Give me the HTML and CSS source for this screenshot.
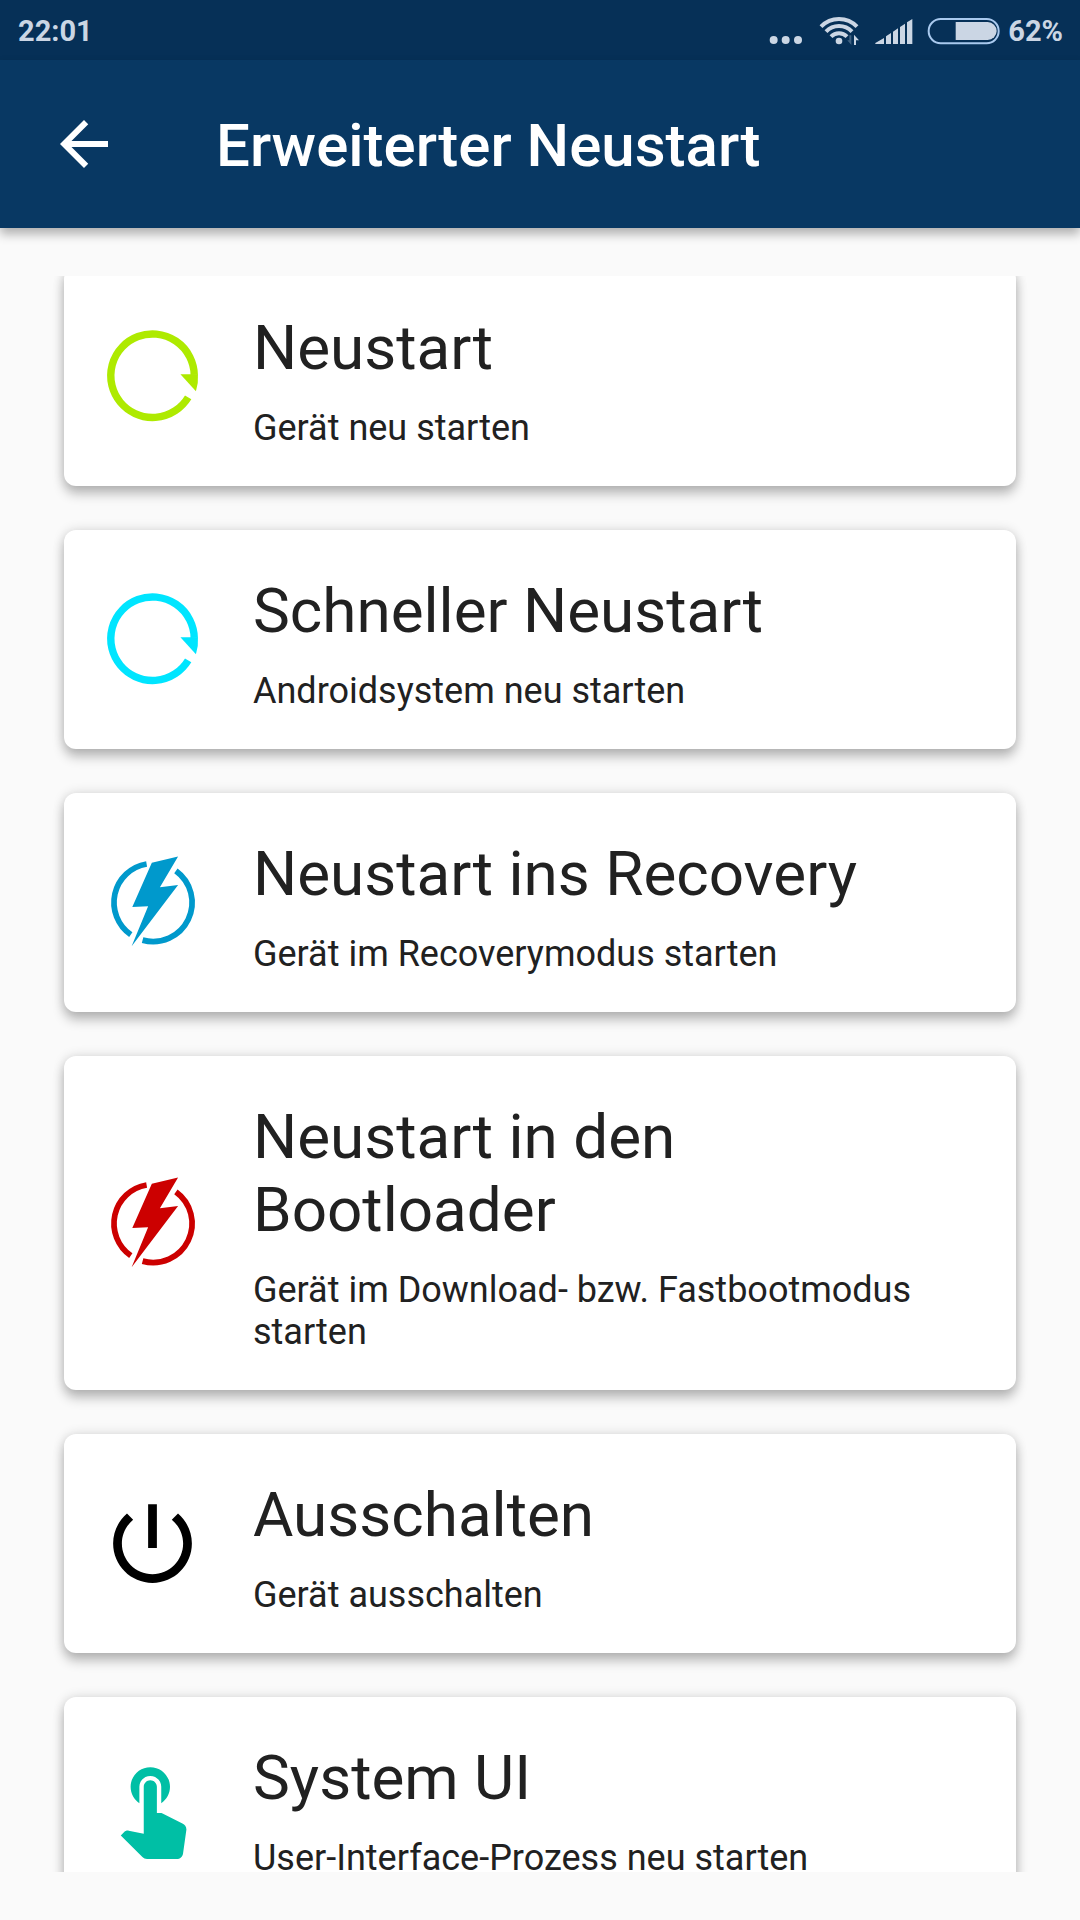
FILE: index.html
```
<!DOCTYPE html>
<html lang="de">
<head>
    <meta charset="UTF-8">
    <meta name="viewport" content="width=device-width, initial-scale=1.0">
    <title>Erweiterter Neustart</title>
    <link rel="stylesheet" href="styles.css">
</head>
<body>

<div class="statusbar">
    <span class="clock">22:01</span>
    <div class="status-icons">
        <svg width="36" height="40" viewBox="87 30 108 120">
            <circle cx="101" cy="117" r="12"/>
            <circle cx="137" cy="117" r="12"/>
            <circle cx="174" cy="117" r="12"/>
        </svg>
        <svg width="42" height="40" viewBox="237 30 126 120">
            <g fill="none" stroke="#cbd6e4" stroke-width="12">
                <path d="M243 77A75 75 0 0 1 351 77"/>
                <path d="M258 92A54 54 0 0 1 336 92"/>
                <path d="M273 107A34 34 0 0 1 321 107"/>
            </g>
            <circle cx="297" cy="120" r="10"/>
            <path d="M328 103h6v29l-12-14h6z" opacity=".3"/>
            <path d="M342 132v-31l15 17h-9v14z"/>
        </svg>
        <svg width="38" height="40" viewBox="408 30 114 120">
            <path d="M409 129v-3l26-15v18zM441 129v-23l15-10v33zM462 129V92l15-10v47zM483 129V78l15-10v61zM504 129V64l16-10v75z"/>
        </svg>
        <svg width="73" height="40" viewBox="562 30 219 120">
            <rect x="567" y="54" width="210" height="73" rx="36" fill="none" stroke="#a9c9ee" stroke-width="6"/>
            <path d="M648 63h96a27 27 0 0 1 0 54h-96z"/>
        </svg>
    </div>
    <span class="battery">62%</span>
</div>

<header>
    <button class="back" type="button" aria-label="Zurück">
        <svg width="72" height="72" viewBox="0 0 24 24">
            <path d="M20 11H7.83l5.59-5.59L12 4l-8 8 8 8 1.41-1.41L7.83 13H20v-2z"/>
        </svg>
    </button>
    <h1>Erweiterter Neustart</h1>
</header>

<main>
    <div class="list">
        <button class="card" type="button">
            <svg class="icon green" viewBox="30 43 312 312">
                <path class="ring" d="M292 261A124 124 0 1 1 310 194"/>
                <path d="M269 192h52A135 135 0 0 1 315 243z"/>
            </svg>
            <span class="text">
                <span class="title">Neustart</span>
                <span class="info">Gerät neu starten</span>
            </span>
        </button>

        <button class="card" type="button">
            <svg class="icon cyan" viewBox="30 43 312 312">
                <path class="ring" d="M292 261A124 124 0 1 1 310 194"/>
                <path d="M269 192h52A135 135 0 0 1 315 243z"/>
            </svg>
            <span class="text">
                <span class="title">Schneller Neustart</span>
                <span class="info">Androidsystem neu starten</span>
            </span>
        </button>

        <button class="card" type="button">
            <svg class="icon blue" viewBox="30 47 312 312">
                <path class="ring thin" d="M168.5 88.6A116 116 0 0 0 121.5 298.4M255.5 109A116 116 0 0 1 156.5 314.8"/>
                <path d="M184 85l78-19-54 92 54-7-138 182 49-119-47 2z"/>
            </svg>
            <span class="text">
                <span class="title">Neustart ins Recovery</span>
                <span class="info">Gerät im Recoverymodus starten</span>
            </span>
        </button>

        <button class="card" type="button">
            <svg class="icon red" viewBox="30 47 312 312">
                <path class="ring thin" d="M168.5 88.6A116 116 0 0 0 121.5 298.4M255.5 109A116 116 0 0 1 156.5 314.8"/>
                <path d="M184 85l78-19-54 92 54-7-138 182 49-119-47 2z"/>
            </svg>
            <span class="text">
                <span class="title">Neustart in den Bootloader</span>
                <span class="info">Gerät im Download- bzw. Fastbootmodus starten</span>
            </span>
        </button>

        <button class="card" type="button">
            <svg class="icon" viewBox="0 0 24 24">
                <path d="M13 3h-2v10h2V3zm4.83 2.17l-1.42 1.42C17.99 7.86 19 9.81 19 12c0 3.87-3.13 7-7 7s-7-3.13-7-7c0-2.19 1.01-4.14 2.58-5.42L6.17 5.17C4.23 6.82 3 9.26 3 12c0 4.97 4.03 9 9 9s9-4.03 9-9c0-2.74-1.23-5.18-3.17-6.83z"/>
            </svg>
            <span class="text">
                <span class="title">Ausschalten</span>
                <span class="info">Gerät ausschalten</span>
            </span>
        </button>

        <button class="card" type="button">
            <svg class="icon teal" viewBox="0 0 24 24">
                <path d="M9 11.24V7.5C9 6.12 10.12 5 11.5 5S14 6.12 14 7.5v3.74c1.21-.81 2-2.18 2-3.74C16 5.01 13.99 3 11.5 3S7 5.01 7 7.5c0 1.56.79 2.93 2 3.74zm9.84 4.63l-4.54-2.26c-.17-.07-.35-.11-.54-.11H13v-6c0-.83-.67-1.5-1.5-1.5S10 6.67 10 7.5v10.74l-3.43-.72c-.08-.01-.15-.03-.24-.03-.31 0-.59.13-.79.33l-.79.8 4.94 4.94c.27.27.65.44 1.06.44h6.79c.75 0 1.33-.55 1.44-1.28l.75-5.27c.01-.07.02-.14.02-.2 0-.62-.38-1.16-.91-1.38z"/>
            </svg>
            <span class="text">
                <span class="title">System UI</span>
                <span class="info">User-Interface-Prozess neu starten</span>
            </span>
        </button>
    </div>
</main>

</body>
</html>
```
FILE: styles.css
```
body {
    display: flex;
    flex-direction: column;
    height: 100vh;
    margin: 0;
    font-family: Roboto, sans-serif;
    color: #212121;
    background-color: #fafafa;
}
button {
    border: none;
    padding: 0;
    font-family: inherit;
    color: inherit;
    cursor: pointer;
}
svg {
    display: block;
    flex-shrink: 0;
}

/* Statusleiste */
.statusbar {
    display: flex;
    align-items: center;
    height: 60px;
    flex-shrink: 0;
    padding: 2px 17px 0 18px;
    box-sizing: border-box;
    font-size: 29px;
    font-weight: bold;
    color: #cbd6e4;
    background-color: #063057;
}
.status-icons {
    display: flex;
    gap: 14px;
    margin-left: auto;
    margin-right: 8px;
    fill: #cbd6e4;
}

/* Titelleiste */
header {
    display: flex;
    align-items: center;
    gap: 96px;
    height: 168px;
    flex-shrink: 0;
    padding: 0 48px;
    box-sizing: border-box;
    color: white;
    background-color: #083863;
    box-shadow: 0 6px 10px rgba(0, 0, 0, 0.3);
}
header h1 {
    margin: 0;
    padding-top: 3px;
    font-size: 60px;
    font-weight: 500;
}
.back {
    background: none;
    fill: white;
}

/* Liste, leicht nach oben gescrollt */
main {
    flex: 1;
    min-height: 0;
    margin: 48px 0;
    overflow: hidden;
}
.list {
    display: flex;
    flex-direction: column;
    gap: 44px;
    margin-top: -9px;
    padding: 0 64px;
}
.card {
    display: flex;
    align-items: center;
    gap: 48px;
    padding: 37px 36px;
    text-align: left;
    background-color: white;
    border-radius: 12px;
    box-shadow: 0 8px 12px rgba(0, 0, 0, 0.24), 0 0 12px rgba(0, 0, 0, 0.14);
}
.text {
    flex: 1;
    padding-top: 7px;
}
.title,
.info {
    display: block;
}
.title {
    margin-bottom: 23px;
    font-size: 62px;
    line-height: 73px;
}
.info {
    font-size: 36px;
    line-height: 42px;
}
.icon {
    width: 105px;
    height: 105px;
}
.ring {
    fill: none;
    stroke-width: 22;
}
.thin {
    stroke-width: 17;
}
.green {
    fill: #aeea00;
    stroke: #aeea00;
}
.cyan {
    fill: #00e5ff;
    stroke: #00e5ff;
}
.blue {
    fill: #0099cc;
    stroke: #0099cc;
}
.red {
    fill: #cc0000;
    stroke: #cc0000;
}
.teal {
    fill: #00bfa5;
}
.icon .ring {
    fill: none;
}
.icon path:not(.ring) {
    stroke: none;
}
```
